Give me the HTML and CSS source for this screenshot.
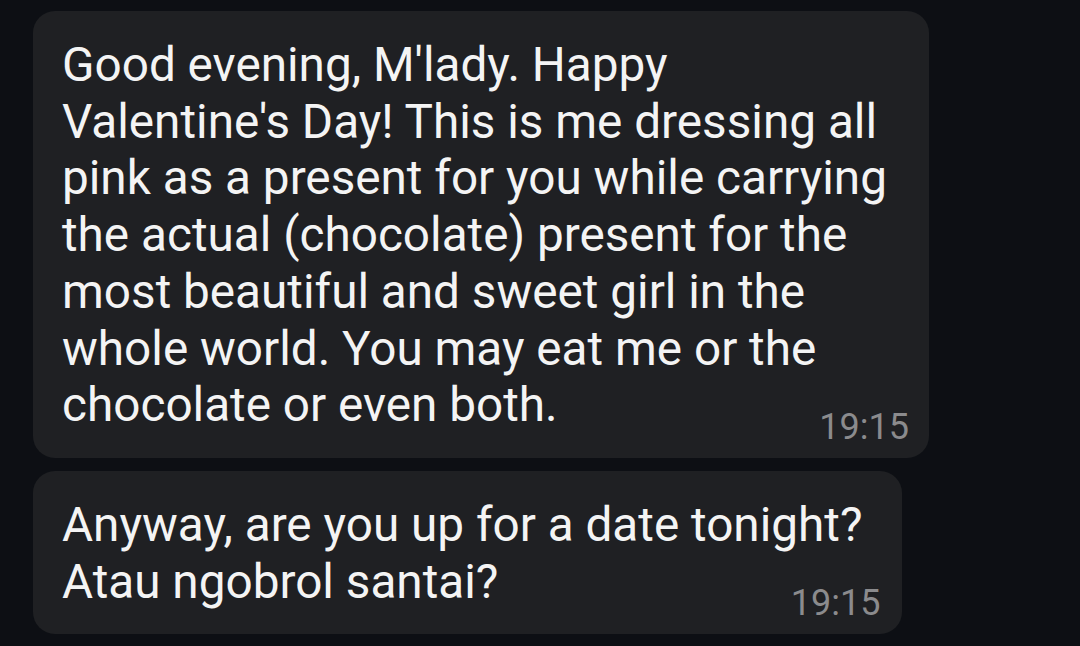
FILE: index.html
```html
<!DOCTYPE html>
<html>
<head>
<meta charset="utf-8">
<link rel="stylesheet" href="styles.css">
</head>
<body>
<div class="chat">
  <div class="bubble wide">
    <p class="text">Good evening, M'lady. Happy Valentine's Day! This is me dressing all pink as a present for you while carrying the actual (chocolate) present for the most beautiful and sweet girl in the whole world. You may eat me or the chocolate or even both.</p>
    <div class="time">19:15</div>
  </div>
  <div class="bubble">
    <p class="text">Anyway, are you up for a date tonight?<br>Atau ngobrol santai?</p>
    <div class="time">19:15</div>
  </div>
</div>
</body>
</html>
```
FILE: styles.css
```css
html, body {
  margin: 0;
  padding: 0;
  height: 100%;
}
body {
  background: #0d0f14;
  font-family: Roboto, "Noto Sans", sans-serif;
  overflow: hidden;
}
.chat {
  display: flex;
  flex-direction: column;
  align-items: flex-start;
  gap: 13px;
  padding: 11px 0 0 33px;
}
.bubble {
  background: #1f2023;
  border-radius: 22px;
  padding: 26px 22px 13px 29px;
  box-sizing: border-box;
}
.bubble.wide {
  width: 896px;
  padding-right: 20px;
}
.text {
  margin: 0 18px 0 0;
  color: #f4f4f4;
  font-size: 47.7px;
  line-height: 56.7px;
}
.time {
  color: #8b8b8d;
  font-size: 36px;
  line-height: 36px;
  text-align: right;
  margin-top: -25px;
}
```
